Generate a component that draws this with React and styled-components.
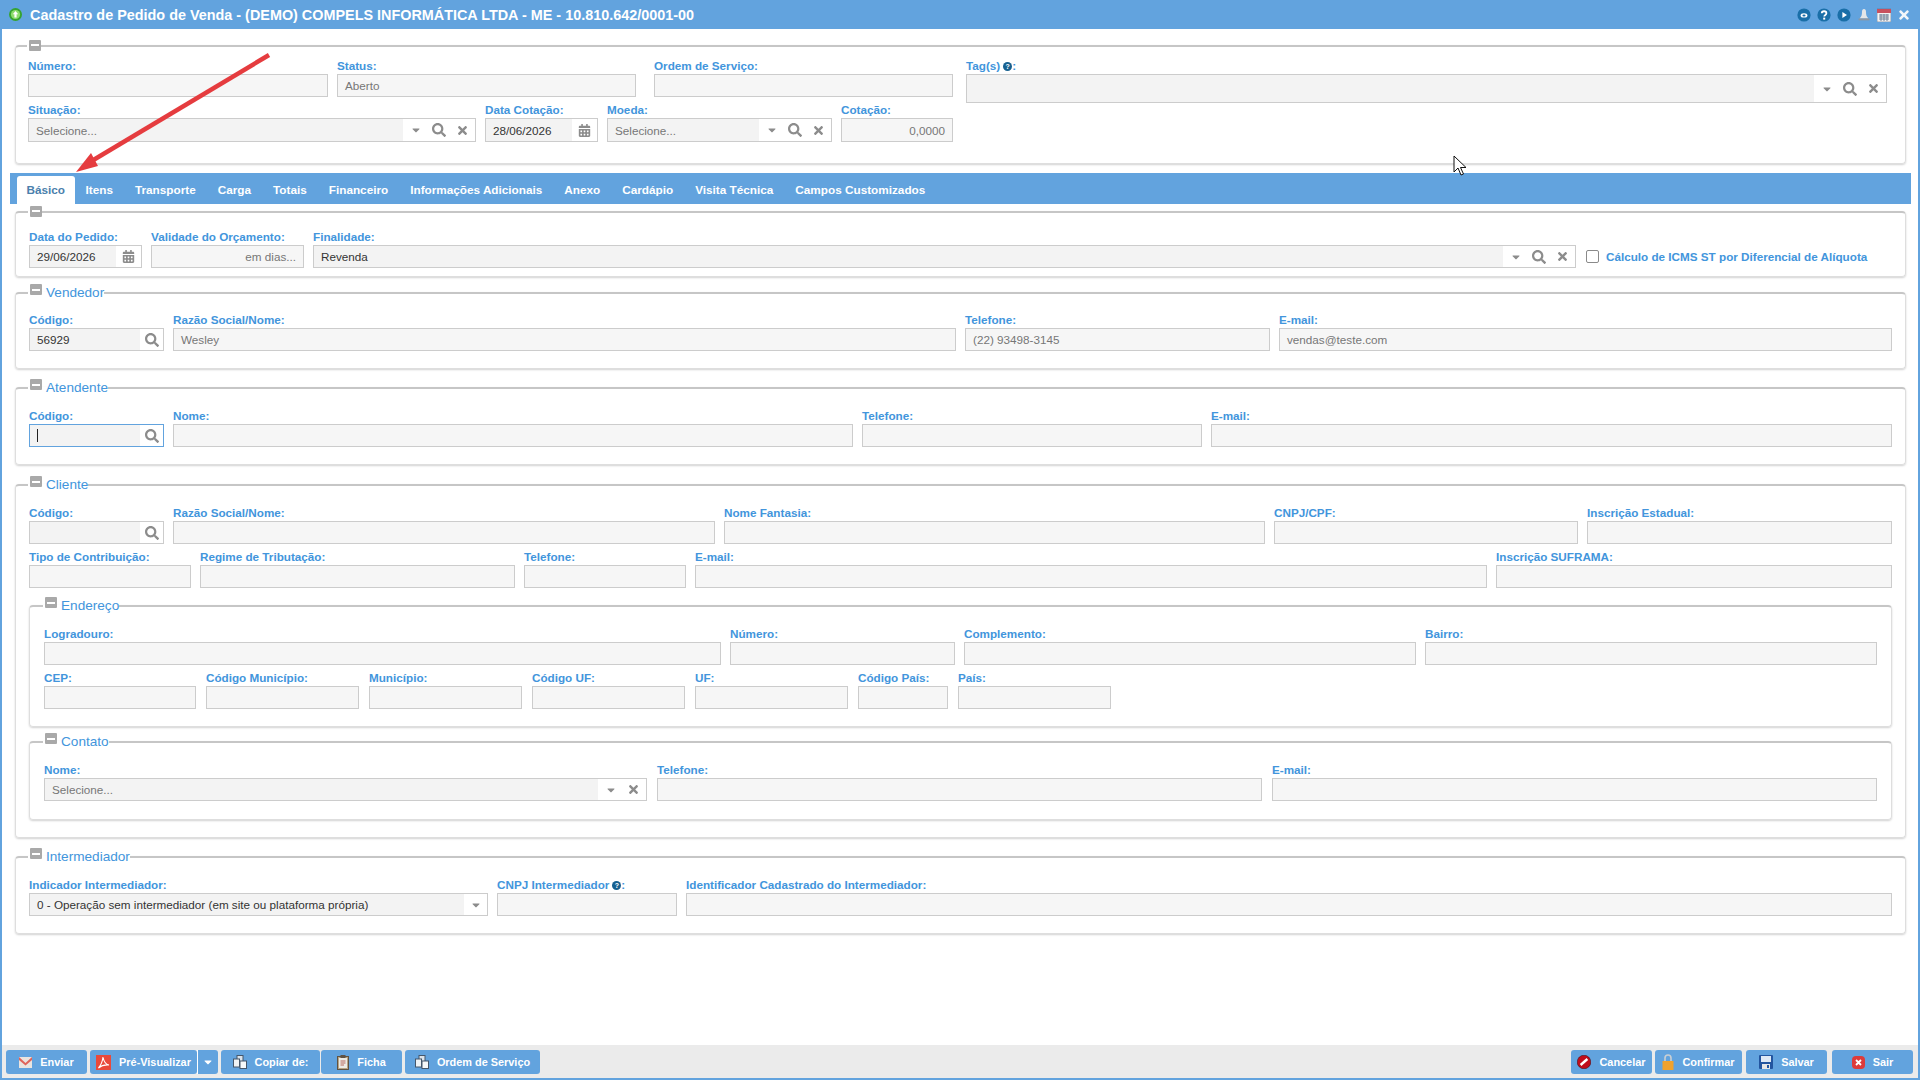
import React from 'react'
import styled, { createGlobalStyle } from 'styled-components'
import { FaSearch, FaTimes, FaCalendarAlt, FaCaretDown } from 'react-icons/fa'

const Global = createGlobalStyle`
  html, body { margin: 0; padding: 0; background: #fff; }
  body { font-family: "Liberation Sans", Arial, sans-serif; font-size: 12px; }
  * { box-sizing: border-box; }
`

const Win = styled.div`
  position: relative;
  width: 1920px;
  height: 1080px;
  display: flex;
  flex-direction: column;
  border: solid #62a3de;
  border-width: 0 2px 2px 2px;
  overflow: hidden;
  background: #fff;
`
const TitleBar = styled.div`
  height: 29px;
  margin: 0 -2px;
  flex: none;
  background: #62a3de;
  color: #fff;
  display: flex;
  align-items: center;
  padding: 0 9px;
`
const TitleText = styled.div`
  font-weight: bold;
  font-size: 14.4px;
  flex: 1;
  margin-left: 8px;
`
const WinIcons = styled.div`
  display: flex;
  align-items: center;
  gap: 6px;
`
const Content = styled.div`
  flex: 1;
  display: flex;
  flex-direction: column;
  padding: 10px 12px 0 13px;
`
const Box = styled.fieldset`
  margin: ${p => p.$mt || 0}px 0 0 0;
  padding: ${p => p.$pt || 0}px ${p => p.$px || 13}px 0;
  border: 1px solid #dedede;
  border-top: 2px solid #c6c6c6;
  border-radius: 4px;
  box-shadow: 0 1px 2px rgba(0,0,0,.18);
  height: ${p => p.$h}px;
  min-width: 0;
  display: flex;
  flex-direction: column;
`
const Legend = styled.legend`
  padding: 0 0 0 2px;
  margin-left: -1px;
  display: flex;
  align-items: center;
  gap: 4px;
  font-size: 13.6px;
  line-height: 14px;
  color: #4295dc;
  height: 14px;
`
const Minus = styled.span`
  width: 12px;
  height: 11px;
  border-radius: 1px;
  background: #a9a9a9;
  display: flex;
  align-items: center;
  justify-content: center;
  margin-top: ${p => p.$plain ? -2 : -7}px;
  &::after { content: ''; width: 8px; height: 2px; background: #fff; }
`
const Row = styled.div`
  display: flex;
  gap: ${p => p.$gap || 9}px;
  align-items: flex-start;
  margin-top: ${p => p.$mt || 0}px;
`
const Field = styled.div`
  width: ${p => p.$w ? p.$w + 'px' : 'auto'};
  flex: ${p => p.$w ? 'none' : 1};
  min-width: 0;
  margin-left: ${p => p.$ml || 0}px;
`
const Label = styled.label`
  display: block;
  height: 15px;
  line-height: 13px;
  font-weight: bold;
  font-size: 11.7px;
  color: #4295dc;
  white-space: nowrap;
`
const Control = styled.div`
  height: ${p => p.$h || 23}px;
  border: 1px solid ${p => p.$focus ? '#62a3de' : '#cccccc'};
  display: flex;
  background: #fff;
  color: ${p => p.$dark ? '#333' : '#777'};
  font-size: 11.7px;
  overflow: hidden;
`
const Value = styled.div`
  flex: 1;
  min-width: 0;
  background: ${p => p.$shade || '#f6f6f6'};
  padding: 0 7px;
  display: flex;
  align-items: center;
  justify-content: ${p => p.$right ? 'flex-end' : 'flex-start'};
  white-space: nowrap;
`
const Caret = styled.span`
  width: 1px;
  height: 13px;
  background: #222;
`
const Tools = styled.div`
  flex: none;
  display: flex;
  align-items: center;
  color: #8c8c8c;
  gap: 10px;
  padding: 0 ${p => p.$pad || 6}px 0 ${p => p.$pad || 7}px;
`
const Hint = styled.span`
  display: inline-block;
  width: 9px;
  height: 9px;
  border-radius: 50%;
  background: #17608f;
  color: #fff;
  font-size: 7px;
  line-height: 9px;
  text-align: center;
  margin-left: 3px;
  vertical-align: 1px;
`
const TabBar = styled.div`
  margin: 9px -5px 0 -5px;
  height: 31px;
  flex: none;
  background: #62a3de;
  display: flex;
  align-items: flex-end;
  padding-left: 7px;
`
const Tab = styled.div`
  height: 28px;
  padding: 0 ${p => p.$active ? 9.5 : 11}px;
  line-height: 27px;
  font-weight: bold;
  font-size: 11.75px;
  color: ${p => p.$active ? '#4a80ac' : '#fff'};
  background: ${p => p.$active ? '#fff' : 'transparent'};
  border-radius: 3px 3px 0 0;
`
const CheckWrap = styled.div`
  display: flex;
  align-items: center;
  gap: 7px;
  height: 23px;
  margin-top: 15px;
  margin-left: 1px;
  font-weight: bold;
  font-size: 11.7px;
  color: #4295dc;
  white-space: nowrap;
`
const Check = styled.span`
  width: 13px;
  height: 13px;
  border: 1px solid #8a8a8a;
  border-radius: 2px;
  background: #fff;
`
const Footer = styled.div`
  flex: none;
  height: 33px;
  background: #ebebeb;
  display: flex;
  align-items: flex-start;
  justify-content: space-between;
  padding: 5px 5px 0 4px;
`
const BtnGroup = styled.div`
  display: flex;
  gap: 3px;
`
const Btn = styled.div`
  height: 24px;
  width: ${p => p.$w}px;
  margin-left: ${p => p.$ml || 0}px;
  background: #62a3de;
  border-radius: 3px;
  color: #fff;
  font-weight: bold;
  font-size: 10.9px;
  display: flex;
  align-items: center;
  justify-content: center;
  gap: 8px;
  white-space: nowrap;
`
const SplitPart = styled.div`
  height: 24px;
  width: 21px;
  margin-left: -3px;
  border-left: 1px solid #fff;
  background: #62a3de;
  border-radius: 0 3px 3px 0;
  color: #fff;
  display: flex;
  align-items: center;
  justify-content: center;
  font-size: 12px;
`
const Arrow = styled.svg`
  position: absolute;
  left: 58px;
  top: 45px;
`
const Pointer = styled.svg`
  position: absolute;
  left: 1451px;
  top: 155px;
`

const TitleBall = () => (
  <svg width="13" height="13" viewBox="0 0 13 13">
    <circle cx="6.5" cy="6.5" r="6.5" fill="#35a32f" />
    <circle cx="6.5" cy="6.5" r="4.6" fill="#8ddc6e" />
    <path d="M6.5 3 L9.2 6.3 H7.6 V9.6 H5.4 V6.3 H3.8 Z" fill="#fff" />
  </svg>
)
const Ic = ({ children }) => (
  <svg width="14" height="14" viewBox="0 0 14 14">
    <circle cx="7" cy="7" r="6.6" fill="#1a6fa8" />
    {children}
  </svg>
)
const BellIcon = () => (
  <svg width="14" height="14" viewBox="0 0 14 14">
    <path d="M7 1 C5.4 1 5 2.4 5 4 C5 7 4.4 8.6 2.6 10.4 H11.4 C9.6 8.6 9 7 9 4 C9 2.4 8.6 1 7 1 Z" fill="#e4e6e8" />
    <rect x="1.6" y="10.4" width="10.8" height="2" fill="#8d97a3" />
  </svg>
)
const CalIcon = () => (
  <svg width="14" height="14" viewBox="0 0 14 14">
    <rect x="0" y="1" width="14" height="13" fill="#f2f2f2" stroke="#5f7188" strokeWidth=".6" />
    <rect x="0" y="1" width="14" height="4" fill="#c8505e" />
    <path d="M2 7 H12 M2 9 H12 M2 11 H12 M4 6 V13 M7 6 V13 M10 6 V13" stroke="#6c7c92" strokeWidth=".9" />
  </svg>
)
const MailIcon = () => (
  <svg width="13" height="11" viewBox="0 0 13 11">
    <rect x="0" y="0" width="13" height="11" fill="#e9e4e0" />
    <path d="M0 0 L6.5 6 L13 0 V3 L6.5 8.5 L0 3 Z" fill="#e0645a" />
  </svg>
)
const PdfIcon = () => (
  <svg width="15" height="15" viewBox="0 0 15 15">
    <rect width="15" height="15" fill="#e9493b" />
    <path d="M7 2 C7.6 6 9 9 13 10 C9 9.6 5.5 10.4 2.4 13 C5 10 6.6 6 7 2 Z" fill="none" stroke="#fff" strokeWidth="1.1" />
  </svg>
)
const CopyIcon = () => (
  <svg width="14" height="14" viewBox="0 0 14 14">
    <rect x="4" y="0.5" width="6" height="7" fill="#dbe3ea" stroke="#45576b" />
    <rect x="0.5" y="4" width="6" height="8" fill="#eef2f5" stroke="#45576b" />
    <rect x="7" y="6" width="6.5" height="7.5" fill="#f7f9fa" stroke="#45576b" />
  </svg>
)
const ClipIcon = () => (
  <svg width="12" height="15" viewBox="0 0 12 15">
    <rect x="0.5" y="1.5" width="11" height="13" fill="#b9a584" stroke="#5f5344" />
    <rect x="2" y="3" width="8" height="10" fill="#ecebe6" />
    <rect x="3.5" y="0" width="5" height="3" fill="#5f5344" />
    <path d="M3.5 6 H8.5 M3.5 8 H8.5 M3.5 10 H7" stroke="#b96a5e" />
  </svg>
)
const CancelIcon = () => (
  <svg width="14" height="14" viewBox="0 0 14 14">
    <circle cx="7" cy="7" r="6.8" fill="#c00d1c" stroke="#3a0508" strokeWidth=".5" />
    <path d="M3.6 10 L10.4 4" stroke="#fff" strokeWidth="2.4" />
  </svg>
)
const LockIcon = () => (
  <svg width="12" height="16" viewBox="0 0 12 16">
    <path d="M3 7 V4 A3 3 0 0 1 9 4 V7" fill="none" stroke="#c9cfd4" strokeWidth="1.6" />
    <rect x="0.5" y="7" width="11" height="9" fill="#f0a22e" />
  </svg>
)
const SaveIcon = () => (
  <svg width="14" height="14" viewBox="0 0 14 14">
    <rect width="14" height="14" rx="1" fill="#23559f" />
    <rect x="2" y="1" width="10" height="6" fill="#dfe9f5" />
    <rect x="3" y="9" width="8" height="5" fill="#e6e6e6" />
    <rect x="8" y="10" width="2" height="3" fill="#23559f" />
  </svg>
)
const ExitIcon = () => (
  <svg width="13" height="13" viewBox="0 0 13 13">
    <rect width="13" height="13" rx="4" fill="#dd3b3b" />
    <path d="M4 4 L9 9 M9 4 L4 9" stroke="#fff" strokeWidth="1.8" />
  </svg>
)

function F({ label, w, value, dark, hint, shade }) {
  return (
    <Field $w={w}>
      <Label>{label}{hint && <Hint>?</Hint>}{hint && ':'}</Label>
      <Control $dark={dark}><Value $shade={shade}>{value}</Value></Control>
    </Field>
  )
}

function Sel({ label, w, value, dark, search = true, clear = true, h, focus, caret, noDrop, pad }) {
  return (
    <Field $w={w}>
      <Label>{label}</Label>
      <Control $h={h} $dark={dark} $focus={focus}>
        <Value $shade="#f3f3f3">{caret ? <Caret /> : value}</Value>
        <Tools $pad={pad}>
          {!noDrop && <FaCaretDown size={12} />}
          {search && <FaSearch size={14} />}
          {clear && <FaTimes size={13} />}
        </Tools>
      </Control>
    </Field>
  )
}

function DateF({ label, w, value, h }) {
  return (
    <Field $w={w}>
      <Label>{label}</Label>
      <Control $dark $h={h}>
        <Value $shade="#f3f3f3">{value}</Value>
        <Tools $pad={6}><FaCalendarAlt size={13} /></Tools>
      </Control>
    </Field>
  )
}

export default function App() {
  return (
    <Win>
      <Global />
      <TitleBar>
        <TitleBall />
        <TitleText>Cadastro de Pedido de Venda - (DEMO) COMPELS INFORMÁTICA LTDA - ME - 10.810.642/0001-00</TitleText>
        <WinIcons>
          <Ic><ellipse cx="7" cy="7.4" rx="3.4" ry="2.2" fill="#fff" /><ellipse cx="7" cy="7.4" rx="1.6" ry="1" fill="#1a6fa8" /></Ic>
          <Ic><path d="M4.8 5.2 C4.8 2.6 9.4 2.6 9.4 5.2 C9.4 7 7.2 6.8 7.2 8.6" fill="none" stroke="#fff" strokeWidth="1.8" /><rect x="6.2" y="9.6" width="2" height="2" fill="#fff" /></Ic>
          <Ic><path d="M5.4 4 L10 7 L5.4 10 Z" fill="#fff" /></Ic>
          <BellIcon />
          <CalIcon />
          <FaTimes size={14} color="#f2f6fa" />
        </WinIcons>
      </TitleBar>

      <Content>
        <Box $h={125} $pt={6} $px={12}>
          <Legend><Minus $plain /></Legend>
          <Row>
            <Field $w={925}>
              <Row>
                <F label="Número:" w={300} />
                <F label="Status:" w={299} value="Aberto" />
                <Field $w={299} $ml={9}>
                  <Label>Ordem de Serviço:</Label>
                  <Control><Value /></Control>
                </Field>
              </Row>
              <Row $mt={6}>
                <Sel label="Situação:" w={448} h={24} value="Selecione..." />
                <DateF label="Data Cotação:" w={113} h={24} value="28/06/2026" />
                <Sel label="Moeda:" w={225} h={24} value="Selecione..." />
                <Field $w={112}>
                  <Label>Cotação:</Label>
                  <Control $h={24}><Value $right>0,0000</Value></Control>
                </Field>
              </Row>
            </Field>
            <Field $w={921} $ml={4}>
              <Label>Tag(s)<Hint>?</Hint>:</Label>
              <Control $h={29}>
                <Value $shade="#f3f3f3" />
                <Tools><FaCaretDown size={12} /><FaSearch size={14} /><FaTimes size={13} /></Tools>
              </Control>
            </Field>
          </Row>
        </Box>

        <TabBar>
          <Tab $active>Básico</Tab>
          <Tab>Itens</Tab>
          <Tab>Transporte</Tab>
          <Tab>Carga</Tab>
          <Tab>Totais</Tab>
          <Tab>Financeiro</Tab>
          <Tab>Informações Adicionais</Tab>
          <Tab>Anexo</Tab>
          <Tab>Cardápio</Tab>
          <Tab>Visita Técnica</Tab>
          <Tab>Campos Customizados</Tab>
        </TabBar>

        <Box $h={72} $mt={1} $pt={11}>
          <Legend><Minus $plain /></Legend>
          <Row>
            <DateF label="Data do Pedido:" w={113} value="29/06/2026" />
            <Field $w={153}>
              <Label>Validade do Orçamento:</Label>
              <Control><Value $right>em dias...</Value></Control>
            </Field>
            <Sel label="Finalidade:" w={1263} value="Revenda" dark />
            <CheckWrap><Check />Cálculo de ICMS ST por Diferencial de Alíquota</CheckWrap>
          </Row>
        </Box>

        <Box $h={83} $mt={9} $pt={13}>
          <Legend><Minus />Vendedor</Legend>
          <Row>
            <Sel label="Código:" w={135} value="56929" dark noDrop clear={false} pad={4.5} />
            <F label="Razão Social/Nome:" w={783} value="Wesley" />
            <F label="Telefone:" w={305} value="(22) 93498-3145" />
            <F label="E-mail:" value="vendas@teste.com" />
          </Row>
        </Box>

        <Box $h={84} $mt={12} $pt={14}>
          <Legend><Minus />Atendente</Legend>
          <Row>
            <Sel label="Código:" w={135} focus caret dark noDrop clear={false} pad={4.5} />
            <F label="Nome:" w={680} />
            <F label="Telefone:" w={340} />
            <F label="E-mail:" />
          </Row>
        </Box>

        <Box $h={360} $mt={13} $pt={14}>
          <Legend><Minus />Cliente</Legend>
          <Row>
            <Sel label="Código:" w={135} noDrop clear={false} pad={4.5} />
            <F label="Razão Social/Nome:" w={542} />
            <F label="Nome Fantasia:" w={541} />
            <F label="CNPJ/CPF:" w={304} />
            <F label="Inscrição Estadual:" />
          </Row>
          <Row $mt={6}>
            <F label="Tipo de Contribuição:" w={162} />
            <F label="Regime de Tributação:" w={315} />
            <F label="Telefone:" w={162} />
            <F label="E-mail:" w={792} />
            <F label="Inscrição SUFRAMA:" />
          </Row>

          <Box $h={128} $mt={11} $pt={14} $px={14}>
            <Legend><Minus />Endereço</Legend>
            <Row>
              <F label="Logradouro:" w={677} />
              <F label="Número:" w={225} />
              <F label="Complemento:" w={452} />
              <F label="Bairro:" />
            </Row>
            <Row $mt={6} $gap={10}>
              <F label="CEP:" w={152} />
              <F label="Código Município:" w={153} />
              <F label="Município:" w={153} />
              <F label="Código UF:" w={153} />
              <F label="UF:" w={153} />
              <F label="Código País:" w={90} />
              <F label="País:" w={153} />
            </Row>
          </Box>

          <Box $h={85} $mt={8} $pt={14} $px={14}>
            <Legend><Minus />Contato</Legend>
            <Row $gap={10}>
              <Sel label="Nome:" w={603} value="Selecione..." search={false} />
              <F label="Telefone:" w={605} />
              <F label="E-mail:" />
            </Row>
          </Box>
        </Box>

        <Box $h={84} $mt={12} $pt={14}>
          <Legend><Minus />Intermediador</Legend>
          <Row>
            <Sel label="Indicador Intermediador:" w={459} value="0 - Operação sem intermediador (em site ou plataforma própria)" dark search={false} clear={false} pad={5.5} />
            <Field $w={180}>
              <Label>CNPJ Intermediador<Hint>?</Hint>:</Label>
              <Control><Value /></Control>
            </Field>
            <F label="Identificador Cadastrado do Intermediador:" />
          </Row>
        </Box>
      </Content>

      <Footer>
        <BtnGroup>
          <Btn $w={81}><MailIcon />Enviar</Btn>
          <Btn $w={107}><PdfIcon />Pré-Visualizar</Btn>
          <SplitPart><FaCaretDown /></SplitPart>
          <Btn $w={99}><CopyIcon />Copiar de:</Btn>
          <Btn $w={81} $ml={-2}><ClipIcon />Ficha</Btn>
          <Btn $w={135}><CopyIcon />Ordem de Serviço</Btn>
        </BtnGroup>
        <BtnGroup>
          <Btn $w={81}><CancelIcon />Cancelar</Btn>
          <Btn $w={87}><LockIcon />Confirmar</Btn>
          <Btn $w={81} $ml={1}><SaveIcon />Salvar</Btn>
          <Btn $w={81} $ml={2}><ExitIcon />Sair</Btn>
        </BtnGroup>
      </Footer>

      <Arrow width="220" height="135" viewBox="0 0 220 135">
        <path d="M209 10 L30 117" stroke="#e53c3f" strokeWidth="4.5" fill="none" />
        <path d="M16 127 L31 108 L38 121 Z" fill="#e53c3f" />
      </Arrow>
      <Pointer width="16" height="22" viewBox="0 0 16 22">
        <path d="M1 1 L1 17 L5 13 L8 20 L10.5 19 L7.5 12.5 L13 12.5 Z" fill="#fff" stroke="#111" strokeWidth="1" />
      </Pointer>
    </Win>
  )
}
